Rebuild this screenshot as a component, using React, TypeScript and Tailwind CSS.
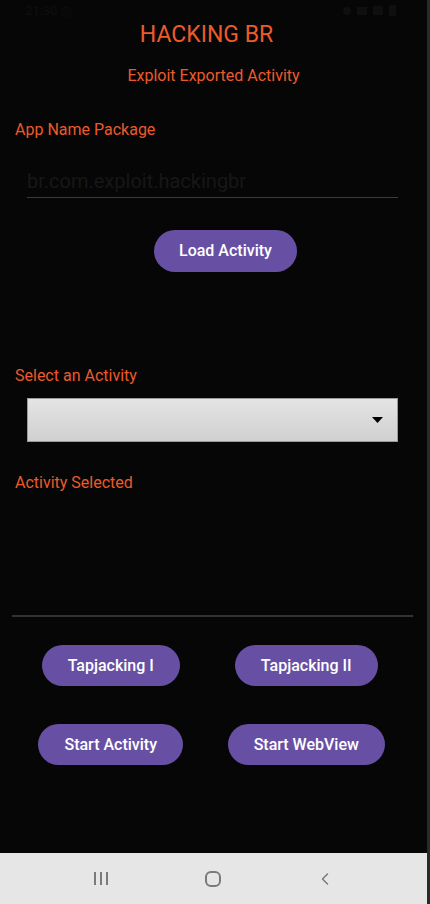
import { ChevronLeft } from "lucide-react";

const font = { fontFamily: "Roboto, 'Noto Sans', sans-serif" };

function PurpleButton({ label }: { label: string }) {
  return (
    <button className="h-[41px] px-[26px] rounded-full bg-[#6750a4] text-white text-[16px] font-medium leading-none">
      {label}
    </button>
  );
}

function Label({ text }: { text: string }) {
  return <div className="ml-[15px] text-[16px] leading-[20px] text-[#ec5a2b]">{text}</div>;
}

export default function App() {
  return (
    <div style={font} className="w-[430px] h-[904px] bg-[#060606] border-r-[3px] border-[#2a2a2a] flex flex-col overflow-hidden">
      <div className="flex-1 flex flex-col">
        {/* status bar, almost invisible on black */}
        <div className="h-[21px] flex items-center justify-between px-[25px] text-[13px] text-[#0f0f0f]">
          <span>21:30 ◎</span>
          <span className="flex items-center gap-[6px] pr-[6px]">
            <span className="w-[8px] h-[8px] rounded-full bg-[#0f0f0f]" />
            <span className="w-[10px] h-[8px] bg-[#0f0f0f]" />
            <span className="w-[10px] h-[9px] bg-[#0f0f0f]" />
            <span className="w-[7px] h-[11px] bg-[#0f0f0f]" />
          </span>
        </div>

        <div className="text-center pr-[14px] text-[23px] leading-[28px] text-[#ef5a29]">HACKING BR</div>
        <div className="mt-[17px] text-center text-[16px] leading-[20px] text-[#ec5a2b]">Exploit Exported Activity</div>

        <div className="mt-[34px]">
          <Label text="App Name Package" />
        </div>

        <div className="mt-[29px] ml-[27px] w-[371px] border-b border-[#3a3a3a] pb-[4px] text-[20px] leading-[24px] text-[#171717]">
          br.com.exploit.hackingbr
        </div>

        <div className="mt-[32px] ml-[154px]">
          <button className="h-[42px] px-[25px] rounded-full bg-[#6750a4] text-white text-[16px] font-medium leading-none">
            Load Activity
          </button>
        </div>

        <div className="mt-[94px]">
          <Label text="Select an Activity" />
        </div>

        <div className="mt-[12px] ml-[27px] w-[371px] h-[44px] border border-[#9a9a9a] bg-gradient-to-b from-[#e4e4e4] to-[#d0d0d0] flex items-center justify-end pr-[14px]">
          <svg width="11" height="6" viewBox="0 0 11 6">
            <path d="M0 0 L11 0 L5.5 6 Z" fill="#000" />
          </svg>
        </div>

        <div className="mt-[31px]">
          <Label text="Activity Selected" />
        </div>

        <div className="mt-[122px] ml-[12px] w-[401px] h-[2px] bg-[#333]" />

        <div className="mt-[28px] ml-[13px] w-[391px] grid grid-cols-2 gap-y-[38px] justify-items-center">
          <PurpleButton label="Tapjacking I" />
          <PurpleButton label="Tapjacking II" />
          <PurpleButton label="Start Activity" />
          <PurpleButton label="Start WebView" />
        </div>
      </div>

      {/* navigation bar */}
      <div className="h-[51px] bg-[#e6e6e6] flex items-center justify-center gap-[92px] pr-[1px]">
        <div className="w-[20px] flex justify-center">
          <div className="flex gap-[4px]">
            <span className="w-[2px] h-[13px] bg-[#7a7a7a]" />
            <span className="w-[2px] h-[13px] bg-[#7a7a7a]" />
            <span className="w-[2px] h-[13px] bg-[#7a7a7a]" />
          </div>
        </div>
        <div className="w-[20px] flex justify-center">
          <div className="w-[16px] h-[16px] rounded-[6px] border-2 border-[#7a7a7a]" />
        </div>
        <div className="w-[20px] flex justify-center">
          <ChevronLeft size={20} strokeWidth={1.8} color="#7a7a7a" />
        </div>
      </div>
    </div>
  );
}
